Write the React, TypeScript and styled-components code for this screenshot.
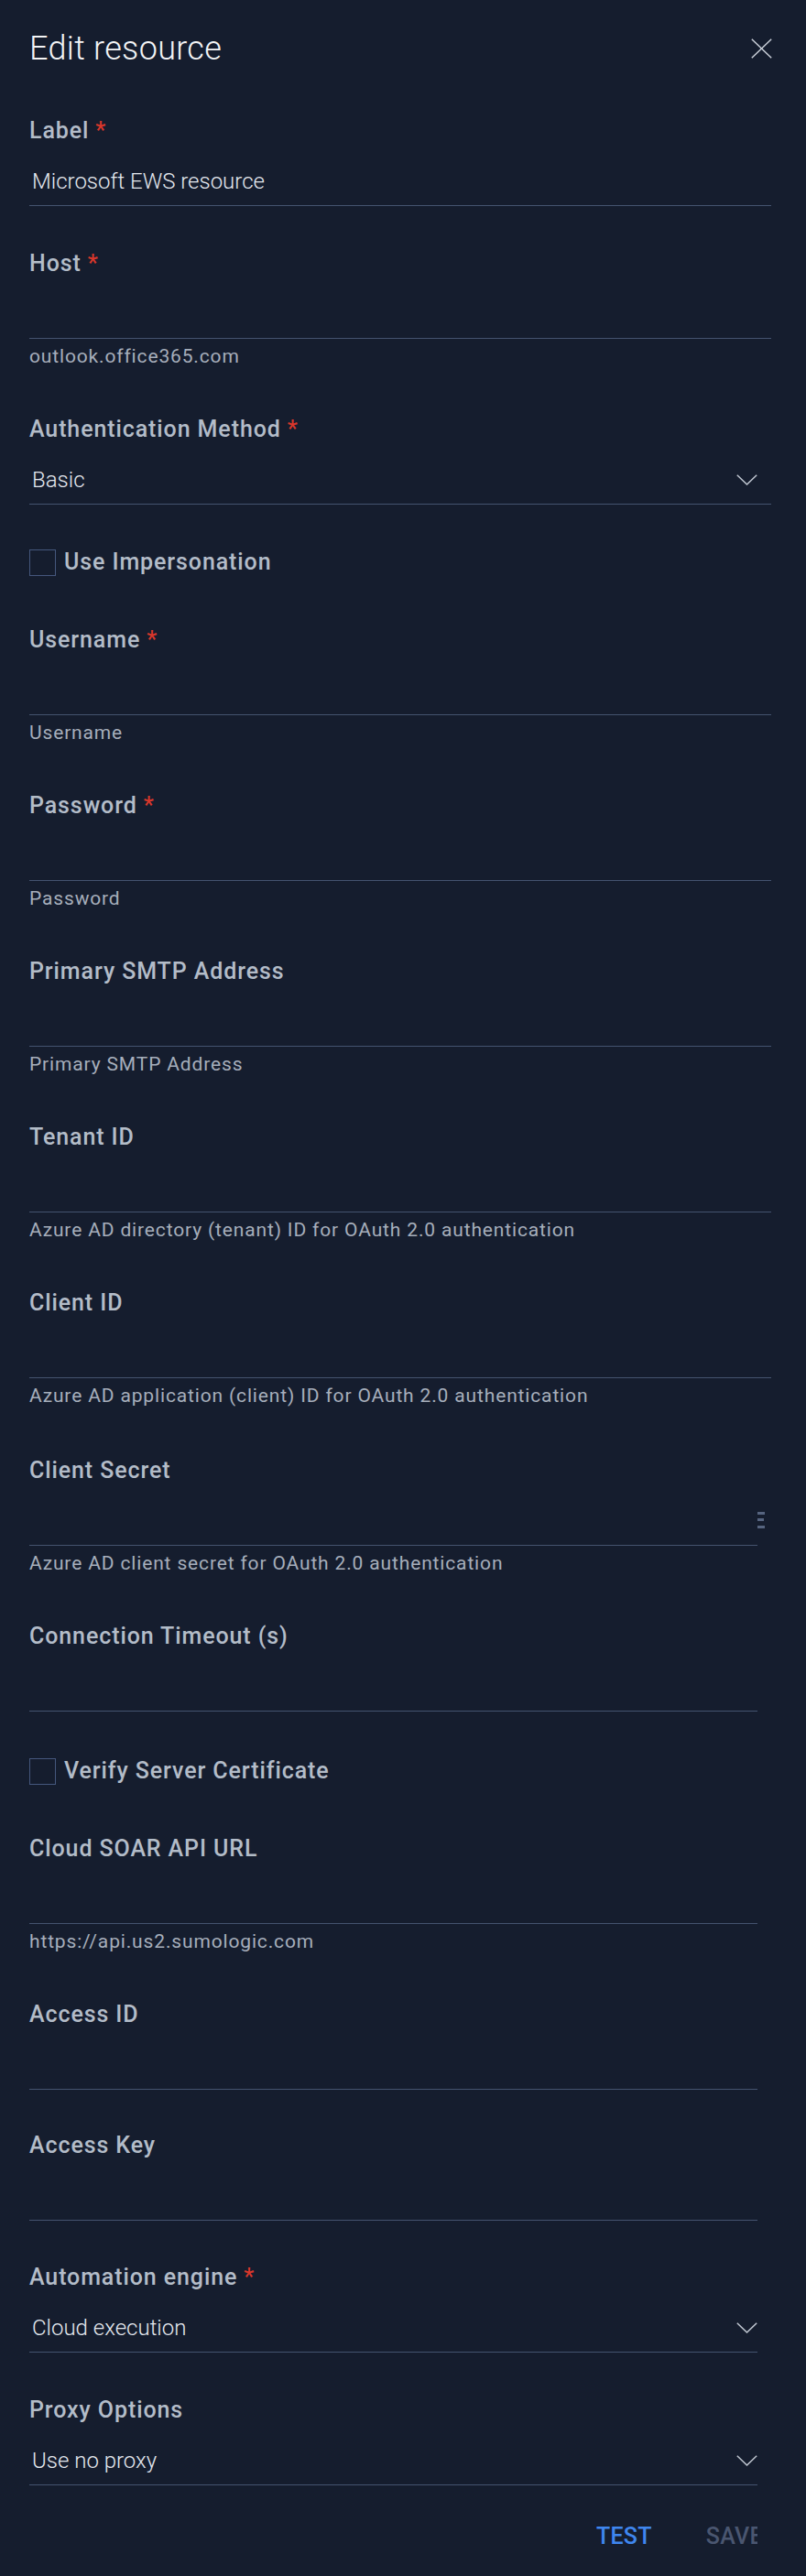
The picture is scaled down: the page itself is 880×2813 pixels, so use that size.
import React from "react";
import styled, { createGlobalStyle } from "styled-components";

const Global = createGlobalStyle`
  html, body {
    margin: 0;
    padding: 0;
    background: #151d2e;
  }
  body {
    font-family: Roboto, "Liberation Sans", Arial, sans-serif;
    -webkit-font-smoothing: antialiased;
  }
  * { box-sizing: border-box; }
`;

const Panel = styled.div`
  width: 880px;
  min-height: 2813px;
  padding: 32px 38px 0 32px;
  background: #151d2e;
  display: flex;
  flex-direction: column;
`;

const Header = styled.header`
  display: flex;
  align-items: center;
  justify-content: space-between;
  height: 42px;
`;

const Title = styled.h1`
  margin: 0;
  font-size: 36px;
  font-weight: 300;
  line-height: 42px;
  letter-spacing: 0.3px;
  color: #f3f4f6;
`;

const CloseButton = styled.button`
  display: flex;
  align-items: center;
  justify-content: center;
  width: 24px;
  height: 24px;
  margin-right: -1px;
  padding: 0;
  border: 0;
  background: none;
  color: #c9cfd8;
  cursor: pointer;
`;

const Form = styled.form`
  display: flex;
  flex-direction: column;
  margin-top: 54px;
`;

const Section = styled.div<{ $inset?: number }>`
  display: flex;
  flex-direction: column;
  margin-right: ${(p) => p.$inset ?? 0}px;
`;

const Field = styled.div<{ $top: number }>`
  display: flex;
  flex-direction: column;
  margin-top: ${(p) => p.$top}px;
`;

const FieldLabel = styled.label`
  font-size: 25px;
  font-weight: 500;
  line-height: 30px;
  letter-spacing: 0.9px;
  color: #b3bcc8;
`;

const Required = styled.span`
  margin-left: 7px;
  color: #d9372b;
`;

const InputRow = styled.div`
  position: relative;
  display: flex;
  align-items: center;
  padding: 25px 0 11px;
  border-bottom: 1px solid #44536f;
`;

const TextInput = styled.input`
  flex: 1;
  min-width: 0;
  height: 30px;
  padding: 0 0 0 3px;
  border: 0;
  outline: none;
  background: transparent;
  font-family: inherit;
  font-size: 24px;
  font-weight: 300;
  line-height: 30px;
  color: #e4e8ee;
`;

const SelectValue = styled.span`
  flex: 1;
  padding-left: 3px;
  font-size: 24px;
  font-weight: 300;
  line-height: 30px;
  color: #e4e8ee;
`;

const Chevron = styled.svg<{ $gap: number }>`
  flex: none;
  width: 23px;
  height: 12px;
  margin-right: ${(p) => p.$gap}px;
  color: #c0c7d1;
`;

const Grip = styled.svg`
  position: absolute;
  right: -8px;
  top: 30px;
  width: 8px;
  height: 18px;
  color: #56647f;
`;

const Helper = styled.div`
  margin-top: 7px;
  font-size: 21px;
  font-weight: 400;
  line-height: 24px;
  letter-spacing: 0.85px;
  color: #a6aebb;
`;

const CheckRow = styled.label<{ $top: number }>`
  display: flex;
  align-items: center;
  gap: 9px;
  height: 30px;
  margin-top: ${(p) => p.$top}px;
  font-size: 25px;
  font-weight: 500;
  line-height: 30px;
  letter-spacing: 0.9px;
  color: #b3bcc8;
`;

const Box = styled.span`
  flex: none;
  width: 29px;
  height: 29px;
  border: 1px solid #45577d;
`;

const Footer = styled.div`
  margin-top: 41px;
  overflow: hidden;
`;

const FooterInner = styled.div`
  display: flex;
  justify-content: flex-end;
  gap: 27px;
  width: calc(100% + 22px);
`;

const ActionButton = styled.button<{ $primary?: boolean }>`
  flex: none;
  padding: 0 16px;
  border: 0;
  background: none;
  font-family: inherit;
  font-size: 25px;
  font-weight: 500;
  line-height: 30px;
  letter-spacing: 0.3px;
  text-transform: uppercase;
  color: ${(p) => (p.$primary ? "#3f86ee" : "#4a5670")};
  cursor: pointer;
`;

type TextFieldProps = {
  label: string;
  required?: boolean;
  value?: string;
  helper?: string;
  top: number;
  grip?: boolean;
};

function TextField({ label, required, value, helper, top, grip }: TextFieldProps) {
  return (
    <Field $top={top}>
      <FieldLabel>
        {label}
        {required && <Required>*</Required>}
      </FieldLabel>
      <InputRow>
        <TextInput readOnly defaultValue={value ?? ""} />
        {grip && (
          <Grip viewBox="0 0 8 18">
            <rect x="0" y="0" width="8" height="3" fill="currentColor" />
            <rect x="0" y="7" width="7" height="3" fill="currentColor" />
            <rect x="0" y="15" width="8" height="3" fill="currentColor" />
          </Grip>
        )}
      </InputRow>
      {helper && <Helper>{helper}</Helper>}
    </Field>
  );
}

type SelectFieldProps = {
  label: string;
  required?: boolean;
  value: string;
  top: number;
  chevronGap: number;
};

function SelectField({ label, required, value, top, chevronGap }: SelectFieldProps) {
  return (
    <Field $top={top}>
      <FieldLabel>
        {label}
        {required && <Required>*</Required>}
      </FieldLabel>
      <InputRow>
        <SelectValue>{value}</SelectValue>
        <Chevron $gap={chevronGap} viewBox="0 0 23 12" fill="none">
          <polyline
            points="0.8,0.8 11.5,11 22.2,0.8"
            stroke="currentColor"
            strokeWidth="1.5"
          />
        </Chevron>
      </InputRow>
    </Field>
  );
}

function Checkbox({ label, top }: { label: string; top: number }) {
  return (
    <CheckRow $top={top}>
      <Box />
      {label}
    </CheckRow>
  );
}

export default function App() {
  return (
    <>
      <Global />
      <Panel>
        <Header>
          <Title>Edit resource</Title>
          <CloseButton aria-label="Close">
            <svg width="23" height="22" viewBox="0 0 23 22" fill="none">
              <line x1="0.8" y1="0.8" x2="22.2" y2="21.2" stroke="currentColor" strokeWidth="1.5" />
              <line x1="22.2" y1="0.8" x2="0.8" y2="21.2" stroke="currentColor" strokeWidth="1.5" />
            </svg>
          </CloseButton>
        </Header>
        <Form>
          <Section>
            <TextField top={0} label="Label" required value="Microsoft EWS resource" />
            <TextField top={48} label="Host" required helper="outlook.office365.com" />
            <SelectField top={53} label="Authentication Method" required value="Basic" chevronGap={15} />
            <Checkbox top={48} label="Use Impersonation" />
            <TextField top={55} label="Username" required helper="Username" />
            <TextField top={53} label="Password" required helper="Password" />
            <TextField top={53} label="Primary SMTP Address" helper="Primary SMTP Address" />
            <TextField
              top={53}
              label="Tenant ID"
              helper="Azure AD directory (tenant) ID for OAuth 2.0 authentication"
            />
            <TextField
              top={53}
              label="Client ID"
              helper="Azure AD application (client) ID for OAuth 2.0 authentication"
            />
          </Section>
          <Section $inset={15}>
            <TextField
              top={55}
              label="Client Secret"
              grip
              helper="Azure AD client secret for OAuth 2.0 authentication"
            />
            <TextField top={53} label="Connection Timeout (s)" />
            <Checkbox top={50} label="Verify Server Certificate" />
            <TextField top={55} label="Cloud SOAR API URL" helper="https://api.us2.sumologic.com" />
            <TextField top={53} label="Access ID" />
            <TextField top={46} label="Access Key" />
            <SelectField top={47} label="Automation engine" required value="Cloud execution" chevronGap={0} />
            <SelectField top={48} label="Proxy Options" value="Use no proxy" chevronGap={0} />
            <Footer>
              <FooterInner>
                <ActionButton type="button" $primary>
                  Test
                </ActionButton>
                <ActionButton type="button">Save</ActionButton>
              </FooterInner>
            </Footer>
          </Section>
        </Form>
      </Panel>
    </>
  );
}
